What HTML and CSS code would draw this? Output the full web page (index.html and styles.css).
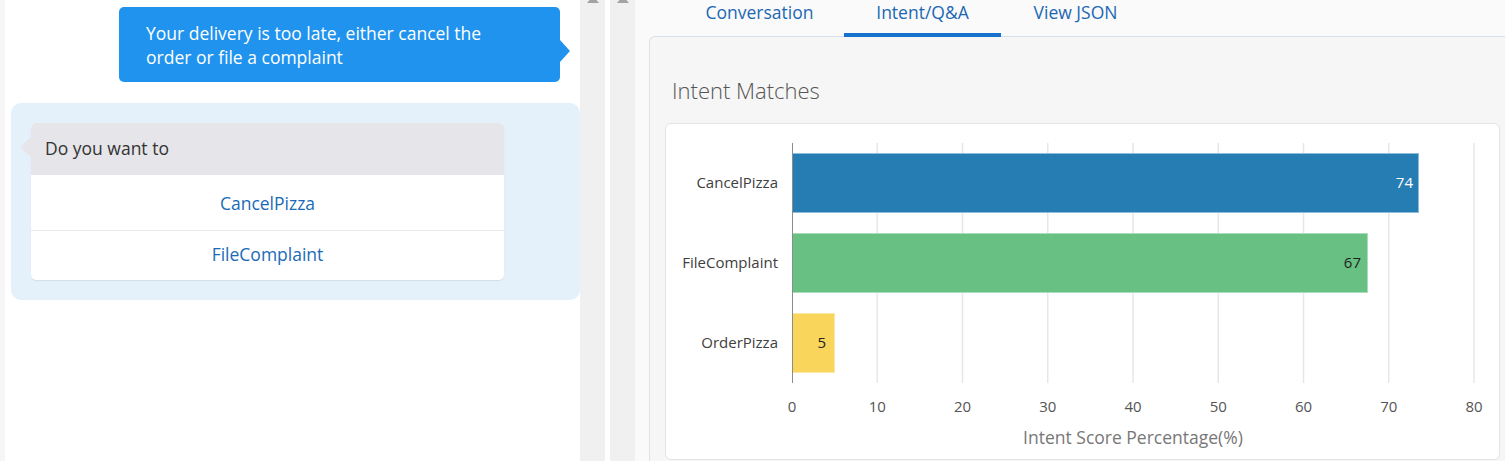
FILE: index.html
```html
<!DOCTYPE html>
<html lang="en">
<head>
<meta charset="utf-8">
<title>Intent Matches</title>
<link rel="stylesheet" href="styles.css">
</head>
<body>
<div class="app">
  <section class="chat">
    <div class="msg-row">
      <div class="user-bubble">Your delivery is too late, either cancel the order or file a complaint</div>
    </div>
    <div class="bot-block">
      <div class="choice-card">
        <div class="choice-head">Do you want to</div>
        <button class="choice-btn first">CancelPizza</button>
        <button class="choice-btn">FileComplaint</button>
      </div>
    </div>
  </section>
  <div class="scrollbar"><span class="arrow"></span></div>
  <div class="gutter"></div>
  <div class="scrollbar"><span class="arrow"></span></div>
  <main class="main">
    <nav class="tabs">
      <a class="tab tab-conv">Conversation</a>
      <a class="tab tab-intent active">Intent/Q&amp;A</a>
      <a class="tab tab-json">View JSON</a>
    </nav>
    <div class="panel">
      <h2 class="panel-title">Intent Matches</h2>
      <div class="chart-card">
        <svg class="chart" width="833" height="335" viewBox="0 0 833 335">
          <g class="grid">
            <line x1="211.25" y1="19" x2="211.25" y2="259"/>
            <line x1="296.5" y1="19" x2="296.5" y2="259"/>
            <line x1="381.75" y1="19" x2="381.75" y2="259"/>
            <line x1="467" y1="19" x2="467" y2="259"/>
            <line x1="552.25" y1="19" x2="552.25" y2="259"/>
            <line x1="637.5" y1="19" x2="637.5" y2="259"/>
            <line x1="722.75" y1="19" x2="722.75" y2="259"/>
            <line x1="808" y1="19" x2="808" y2="259"/>
          </g>
          <rect class="bar bar-blue" x="126.5" y="29.5" width="626" height="59"/>
          <rect class="bar bar-green" x="126.5" y="109.5" width="575" height="59"/>
          <rect class="bar bar-yellow" x="126.5" y="189.5" width="42" height="59"/>
          <line class="axis" x1="126.5" y1="19" x2="126.5" y2="259"/>
          <text class="cat" x="112" y="63.5">CancelPizza</text>
          <text class="cat" x="112" y="143.5">FileComplaint</text>
          <text class="cat" x="112" y="223.5">OrderPizza</text>
          <text class="val val-light" x="747" y="64">74</text>
          <text class="val" x="695" y="144">67</text>
          <text class="val" x="160" y="224">5</text>
          <g class="ticks">
            <text x="126" y="288">0</text>
            <text x="211.25" y="288">10</text>
            <text x="296.5" y="288">20</text>
            <text x="381.75" y="288">30</text>
            <text x="467" y="288">40</text>
            <text x="552.25" y="288">50</text>
            <text x="637.5" y="288">60</text>
            <text x="722.75" y="288">70</text>
            <text x="808" y="288">80</text>
          </g>
          <text class="axis-title" x="467" y="320">Intent Score Percentage(%)</text>
        </svg>
      </div>
    </div>
  </main>
</div>
</body>
</html>
```

FILE: styles.css
```css
* { box-sizing: border-box; }

html, body {
  margin: 0;
  padding: 0;
  height: 461px;
  overflow: hidden;
  background: #ffffff;
  font-family: "Open Sans", "Noto Sans", sans-serif;
}

.app {
  display: flex;
  height: 461px;
}

/* ---------- chat pane ---------- */
.chat {
  width: 580px;
  flex: none;
  border-left: 5px solid #f6f6f6;
  background: #ffffff;
  padding-top: 7px;
}

.msg-row {
  display: flex;
  justify-content: flex-end;
  padding-right: 20px;
}

.user-bubble {
  position: relative;
  width: 441px;
  min-height: 75px;
  background: #2093ef;
  color: #ffffff;
  border-radius: 5px;
  font-size: 17.5px;
  line-height: 24px;
  padding: 14px 48px 13px 27px;
}

.user-bubble::after {
  content: "";
  position: absolute;
  right: -10px;
  top: 33px;
  border-top: 11px solid transparent;
  border-bottom: 11px solid transparent;
  border-left: 10px solid #2093ef;
}

.bot-block {
  margin: 21px 0 0 6px;
  background: #e4f1fa;
  border-radius: 10px;
  padding: 20px;
}

.choice-card {
  position: relative;
  width: 473px;
  background: #ffffff;
  border-radius: 5px;
  box-shadow: 0 1px 1px rgba(0, 0, 0, 0.08);
  display: flex;
  flex-direction: column;
}

.choice-head {
  height: 52px;
  background: #e5e5ea;
  border-radius: 5px 5px 0 0;
  color: #333333;
  font-size: 17.5px;
  line-height: 51px;
  padding-left: 14px;
  position: relative;
}

.choice-head::before {
  content: "";
  position: absolute;
  left: -11px;
  top: 14px;
  border-top: 10px solid transparent;
  border-bottom: 10px solid transparent;
  border-right: 11px solid #e5e5ea;
}

.choice-btn {
  display: block;
  width: 100%;
  height: 55px;
  border: 0;
  background: transparent;
  color: #1b6ab7;
  font-family: inherit;
  font-size: 17.5px;
  text-align: center;
  padding: 0;
}

.choice-btn + .choice-btn {
  border-top: 1px solid #e9e9ec;
  height: 50px;
  padding-bottom: 3px;
}

/* ---------- scrollbars ---------- */
.scrollbar {
  width: 25px;
  flex: none;
  background: #f0f0f0;
  display: flex;
  justify-content: center;
  overflow: hidden;
}

.scrollbar .arrow {
  width: 0;
  height: 0;
  margin-top: -4px;
  border-left: 6px solid transparent;
  border-right: 6px solid transparent;
  border-bottom: 7px solid #a3a3a3;
}

.gutter {
  width: 5px;
  flex: none;
  background: #ffffff;
}

/* ---------- main pane ---------- */
.main {
  flex: 1;
  background: #fafafa;
  padding-left: 14px;
  display: flex;
  flex-direction: column;
  min-width: 0;
}

.tabs {
  display: flex;
  height: 37px;
  padding-left: 26px;
  position: relative;
  z-index: 1;
}

.tab {
  height: 37px;
  line-height: 24px;
  font-size: 17.5px;
  color: #1b68b4;
  text-align: center;
  border-bottom: 4px solid transparent;
  white-space: nowrap;
}

.tab-conv { width: 169px; }
.tab-intent { width: 157px; }
.tab-json { width: 149px; }

.tab.active {
  border-bottom-color: #1572cf;
}

.panel {
  flex: 1;
  margin-top: -1px;
  margin-right: -8px;
  background: #f6f6f6;
  border-top: 1px solid #d7dfe9;
  border-left: 1px solid #dde3ea;
  border-top-left-radius: 6px;
  padding: 38px 0 0 15px;
}

.panel-title {
  margin: 0 0 18px 7px;
  font-size: 22px;
  font-weight: 300;
  line-height: 30px;
  color: #555555;
}

.chart-card {
  width: 835px;
  height: 337px;
  background: #ffffff;
  border: 1px solid #e1e4e9;
  border-radius: 6px;
}

.chart {
  display: block;
  font-family: "Open Sans", "Noto Sans", sans-serif;
}

.grid line {
  stroke: #e4e7ec;
  stroke-width: 1.5;
}

.axis {
  stroke: #8c8c8c;
  stroke-width: 1;
}

.bar { stroke-width: 1; }
.bar-blue { fill: #267db3; stroke: #8dbddb; }
.bar-green { fill: #68c182; stroke: #a9dcb8; }
.bar-yellow { fill: #f9d55c; stroke: #fbe7a6; }

.cat {
  font-size: 15px;
  fill: #404040;
  text-anchor: end;
}

.val {
  font-size: 15px;
  fill: #222222;
  text-anchor: end;
}

.val-light { fill: #ffffff; }

.ticks text {
  font-size: 15px;
  fill: #555555;
  text-anchor: middle;
}

.axis-title {
  font-size: 17.5px;
  fill: #777777;
  text-anchor: middle;
}
```
